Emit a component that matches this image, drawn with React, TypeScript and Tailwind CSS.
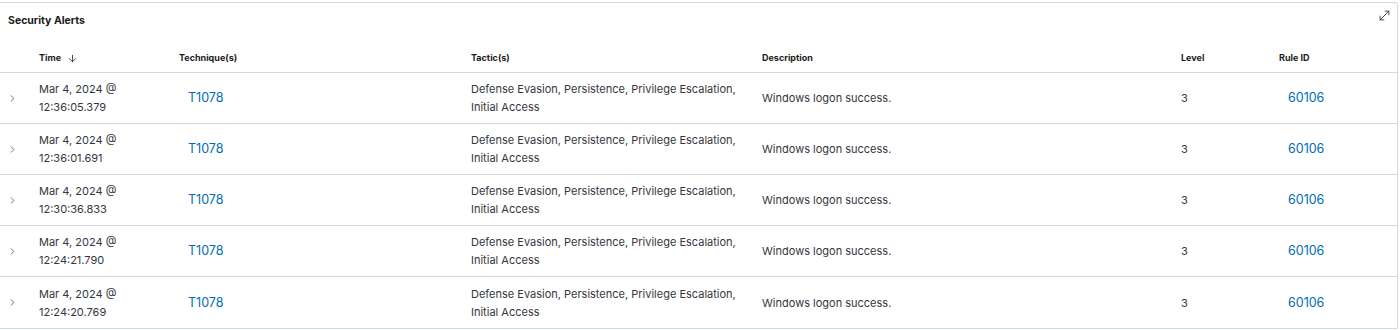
import { ArrowDown, ChevronRight, MoveDiagonal } from "lucide-react";

type Alert = {
  date: string;
  time: string;
  technique: string;
  tactics: string;
  description: string;
  level: number;
  ruleId: string;
};

const alerts: Alert[] = [
  { date: "Mar 4, 2024 @", time: "12:36:05.379", technique: "T1078", tactics: "Defense Evasion, Persistence, Privilege Escalation, Initial Access", description: "Windows logon success.", level: 3, ruleId: "60106" },
  { date: "Mar 4, 2024 @", time: "12:36:01.691", technique: "T1078", tactics: "Defense Evasion, Persistence, Privilege Escalation, Initial Access", description: "Windows logon success.", level: 3, ruleId: "60106" },
  { date: "Mar 4, 2024 @", time: "12:30:36.833", technique: "T1078", tactics: "Defense Evasion, Persistence, Privilege Escalation, Initial Access", description: "Windows logon success.", level: 3, ruleId: "60106" },
  { date: "Mar 4, 2024 @", time: "12:24:21.790", technique: "T1078", tactics: "Defense Evasion, Persistence, Privilege Escalation, Initial Access", description: "Windows logon success.", level: 3, ruleId: "60106" },
  { date: "Mar 4, 2024 @", time: "12:24:20.769", technique: "T1078", tactics: "Defense Evasion, Persistence, Privilege Escalation, Initial Access", description: "Windows logon success.", level: 3, ruleId: "60106" },
];

const cols = "grid grid-cols-[31px_140px_292px_291px_419px_98px_1fr]";

export default function App() {
  return (
    <div className="h-[330px] w-[1400px] bg-white pt-[2px] font-['Inter',sans-serif] text-[#343741]">
      <div className="mr-[2px] rounded-tr-[3px] border-t border-r border-b border-[#d3dae6]">
        <div className="flex h-[41px] items-start justify-between pl-2 pr-[5px]">
          <h2 className="mt-[11px] text-[10.5px] leading-[14px] font-bold text-[#1a1c21]">Security Alerts</h2>
          <MoveDiagonal className="mt-[5px] h-[15px] w-[15px] text-[#343741]" strokeWidth={1.4} />
        </div>

        <div className={`${cols} h-[29px] items-center border-b border-[#d3dae6] text-[9px] font-bold text-[#1a1c21]`}>
          <div />
          <div className="flex items-center gap-[6px] px-2">
            Time
            <ArrowDown className="h-[11px] w-[11px]" strokeWidth={1.75} />
          </div>
          <div className="px-2">Technique(s)</div>
          <div className="px-2">Tactic(s)</div>
          <div className="px-2">Description</div>
          <div className="px-2">Level</div>
          <div className="px-2">Rule ID</div>
        </div>

        {alerts.map((a, i) => (
          <div
            key={a.time}
            className={`${cols} h-[51px] items-center text-[11px] leading-[18px] ${i < alerts.length - 1 ? "border-b border-[#d3dae6]" : ""}`}
          >
            <div className="flex pl-[7px]">
              <ChevronRight className="h-[11px] w-[11px] text-[#343741]" strokeWidth={1.5} />
            </div>
            <div className="px-2">
              {a.date}
              <br />
              {a.time}
            </div>
            <div className="pl-[17px]">
              <a className="text-[12.5px] text-[#006bb8]">{a.technique}</a>
            </div>
            <div className="px-2">{a.tactics}</div>
            <div className="px-2">{a.description}</div>
            <div className="px-2">{a.level}</div>
            <div className="pl-[17px]">
              <a className="text-[12.5px] text-[#006bb8]">{a.ruleId}</a>
            </div>
          </div>
        ))}
      </div>
    </div>
  );
}
